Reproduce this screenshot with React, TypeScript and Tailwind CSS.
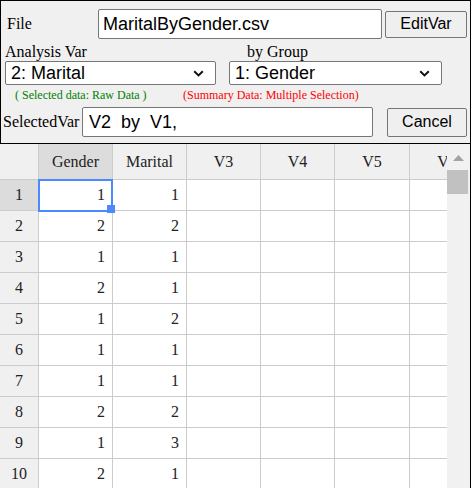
import React from "react";

const serif = { fontFamily: '"Liberation Serif", "Times New Roman", serif' };
const sans = { fontFamily: '"Liberation Sans", Arial, sans-serif' };

const columns = [
  { name: "Gender", width: "w-[74px]" },
  { name: "Marital", width: "w-[74px]" },
  { name: "V3", width: "w-[74px]" },
  { name: "V4", width: "w-[74px]" },
  { name: "V5", width: "w-[75px]" },
  { name: "V6", width: "w-[75px]" },
];

const rows: [number, number][] = [
  [1, 1],
  [2, 2],
  [1, 1],
  [2, 1],
  [1, 2],
  [1, 1],
  [1, 1],
  [2, 2],
  [1, 3],
  [2, 1],
];

function Chevron() {
  return (
    <svg width="11" height="7" viewBox="0 0 11 7" className="shrink-0">
      <path d="M1.2 1.2 L5.5 5.4 L9.8 1.2" fill="none" stroke="#111" strokeWidth="2" />
    </svg>
  );
}

function FakeSelect({ value, width }: { value: string; width: string }) {
  return (
    <div className={`flex h-[24px] ${width} items-center justify-between rounded-[2px] border border-[#767676] bg-white pl-[5px] pr-[11px] text-[18px] leading-none text-black`} style={sans}>
      <span>{value}</span>
      <Chevron />
    </div>
  );
}

function ControlPanel() {
  return (
    <div className="flex h-[144px] flex-col border border-black bg-[#f0f0f0] text-[16px] text-black" style={serif}>
      <div className="mt-[8px] flex h-[30px] items-center">
        <span className="ml-[6px] w-[91px]">File</span>
        <div className="flex h-[30px] w-[284px] items-center rounded-[2px] border border-[#767676] bg-white pl-[4px] text-[18px]" style={sans}>
          MaritalByGender.csv
        </div>
        <button className="ml-[3px] h-[27px] w-[82px] rounded-[2px] border border-[#767676] bg-[#efefef] text-[16px] leading-none" style={sans} type="button">
          EditVar
        </button>
      </div>
      <div className="flex h-[22px] items-center pt-[4px]">
        <span className="ml-[4px] w-[242px]">Analysis Var</span>
        <span>by Group</span>
      </div>
      <div className="flex h-[24px] items-center">
        <div className="ml-[4px]">
          <FakeSelect value="2: Marital" width="w-[211px]" />
        </div>
        <div className="ml-[13px]">
          <FakeSelect value="1: Gender" width="w-[213px]" />
        </div>
      </div>
      <div className="flex h-[20px] items-center text-[12px]">
        <span className="ml-[14px] w-[168px] text-[#008000]">( Selected data: Raw Data )</span>
        <span className="text-[#ff0000]">(Summary Data: Multiple Selection)</span>
      </div>
      <div className="mt-[2px] flex h-[30px] items-center">
        <span className="ml-[2px] w-[79px]">SelectedVar</span>
        <div className="flex h-[30px] w-[291px] items-center rounded-[2px] border border-[#767676] bg-white pl-[6px] text-[18px] whitespace-pre" style={sans}>
          V2  by  V1,
        </div>
        <button className="ml-[14px] h-[29px] w-[80px] rounded-[2px] border border-[#767676] bg-[#efefef] text-[16px] leading-none" style={sans} type="button">
          Cancel
        </button>
      </div>
    </div>
  );
}

function Grid() {
  return (
    <div className="flex min-h-0 flex-1 border-r border-black bg-white">
      <div className="w-[447px] shrink-0 overflow-hidden text-[16px] text-[#222]" style={serif}>
        <div className="flex h-[36px] w-max">
          <div className="h-full w-[39px] shrink-0 border-r border-b border-[#cccccc] bg-[#f0f0f0]" />
          {columns.map((col, i) => (
            <div
              className={`flex h-full ${col.width} shrink-0 items-center justify-center border-r border-b border-[#cccccc] ${i === 0 ? "bg-[#dcdcdc]" : "bg-[#f0f0f0]"}`}
              key={col.name}
            >
              {col.name}
            </div>
          ))}
        </div>
        {rows.map((row, r) => (
          <div className="flex h-[31px] w-max" key={r}>
            <div className={`flex h-full w-[39px] shrink-0 items-center justify-center border-r border-b border-[#cccccc] ${r === 0 ? "bg-[#dcdcdc]" : "bg-[#f0f0f0]"}`}>
              {r + 1}
            </div>
            {columns.map((col, c) => (
              <div className={`relative flex h-full ${col.width} shrink-0 items-center justify-end border-r border-b border-[#cccccc] pr-[7px]`} key={col.name}>
                {c < 2 ? row[c] : ""}
                {r === 0 && c === 0 ? (
                  <>
                    <div className="absolute top-[-1px] left-[-1px] h-[33px] w-[75px] border-2 border-[#4b89ff]" />
                    <div className="absolute top-[25px] left-[68px] z-10 h-[8px] w-[8px] bg-[#4b89ff]" />
                  </>
                ) : null}
              </div>
            ))}
          </div>
        ))}
      </div>
      <div className="flex w-[23px] shrink-0 flex-col bg-[#f1f1f1]">
        <div className="flex h-[26px] w-[22px] items-center justify-center pt-[2px]">
          <svg width="11" height="6" viewBox="0 0 11 6">
            <path d="M0 6 L5.5 0 L11 6 Z" fill="#a3a3a3" />
          </svg>
        </div>
        <div className="h-[24px] w-[21px] bg-[#c1c1c1]" />
      </div>
    </div>
  );
}

export default function App() {
  return (
    <div className="flex h-[488px] w-[471px] flex-col overflow-hidden bg-white">
      <ControlPanel />
      <Grid />
    </div>
  );
}
